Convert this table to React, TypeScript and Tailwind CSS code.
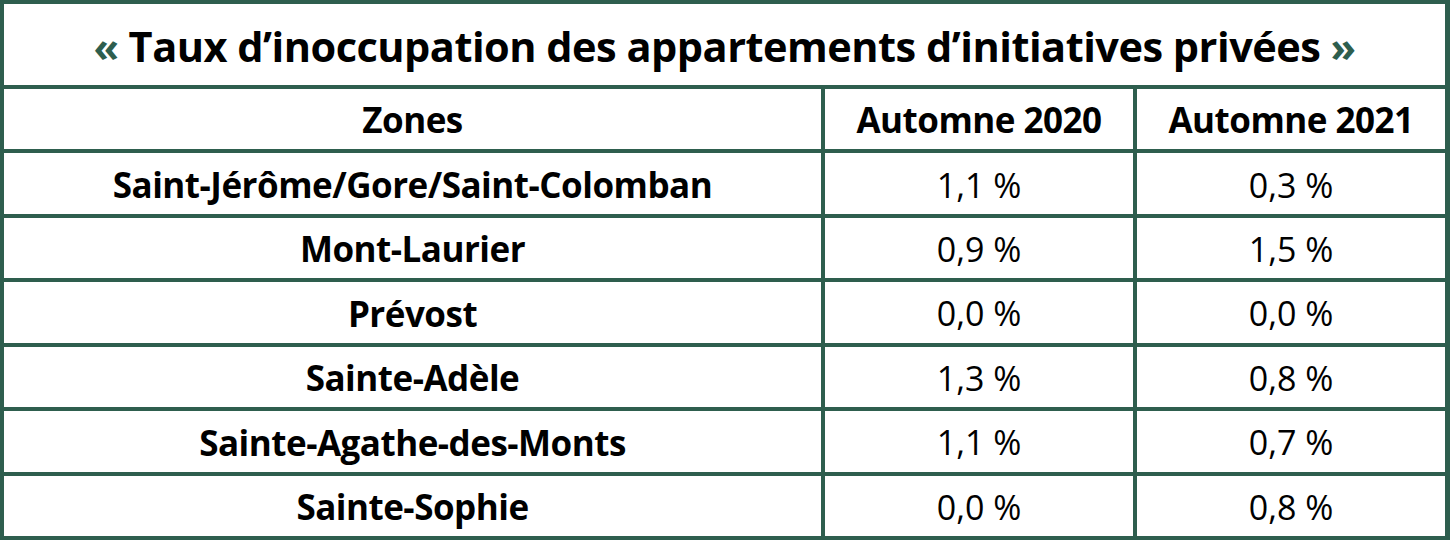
const rows = [
  ['Saint-Jérôme/Gore/Saint-Colomban', '1,1 %', '0,3 %'],
  ['Mont-Laurier', '0,9 %', '1,5 %'],
  ['Prévost', '0,0 %', '0,0 %'],
  ['Sainte-Adèle', '1,3 %', '0,8 %'],
  ['Sainte-Agathe-des-Monts', '1,1 %', '0,7 %'],
  ['Sainte-Sophie', '0,0 %', '0,8 %'],
];

export default function App() {
  return (
    <div className="w-[1450px] h-[540px] bg-[#2e5e4e] pt-[4px] pl-[4px] pr-[5px] pb-[4px] font-['Open_Sans',sans-serif] text-black [font-variant-ligatures:none]">
      <div className="grid h-full grid-cols-[817px_308px_1fr] grid-rows-[81px_repeat(7,1fr)] gap-[4px]">
        <div className="col-span-3 flex items-center justify-center bg-white pt-[3px] text-[41.5px] font-bold tracking-[-0.5px]">
          <span className="text-[#2e5e4e]">«</span>
          <span className="mx-[10px]">Taux d’inoccupation des appartements d’initiatives privées</span>
          <span className="text-[#2e5e4e]">»</span>
        </div>
        <div className="flex items-center justify-center bg-white pt-[3px] text-[35px] font-bold tracking-[-0.5px]">Zones</div>
        <div className="flex items-center justify-center bg-white pt-[3px] text-[35px] font-bold tracking-[-0.5px]">Automne 2020</div>
        <div className="flex items-center justify-center bg-white pt-[3px] text-[35px] font-bold tracking-[-0.5px]">Automne 2021</div>
        {rows.map(([zone, a, b]) => (
          <>
            <div key={zone} className="flex items-center justify-center bg-white pt-[3px] text-[35px] font-bold tracking-[-0.5px]">{zone}</div>
            <div className="flex items-center justify-center bg-white pt-[3px] text-[34px]">{a}</div>
            <div className="flex items-center justify-center bg-white pt-[3px] text-[34px]">{b}</div>
          </>
        ))}
      </div>
    </div>
  );
}
